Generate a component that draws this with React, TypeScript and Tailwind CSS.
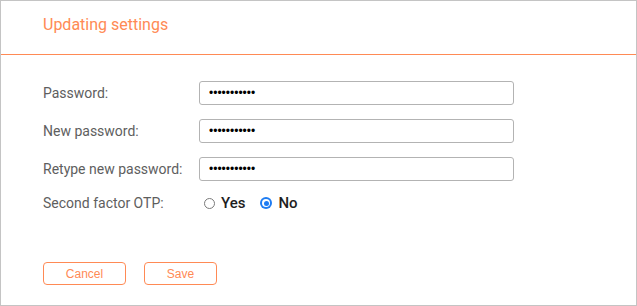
import React from "react";

const labelCls = "w-[156px] shrink-0 text-[14px] text-[#5e5e5e] font-['Roboto',sans-serif]";

function PwdRow({ label }: { label: string }) {
  return (
    <div className="flex items-center h-[24px]">
      <div className={labelCls}>{label}</div>
      <input
        type="password"
        readOnly
        defaultValue="abcdefghijk"
        className="w-[315px] h-[24px] border border-[#b3b3b3] rounded-[3px] px-[9px] text-[12px] text-black font-['Liberation_Sans',sans-serif] outline-none bg-white"
      />
    </div>
  );
}

export default function App() {
  return (
    <div className="w-[637px] h-[306px] border border-[#c4c4c4] bg-white flex flex-col">
      <div className="h-[54px] shrink-0 border-b border-[#ff8a55] flex items-center pl-[42px] pb-[6px]">
        <span className="text-[16px] text-[#ff8a55] font-['Roboto',sans-serif]">Updating settings</span>
      </div>
      <div className="flex flex-col pl-[42px] pt-[26px] gap-[14px]">
        <PwdRow label="Password:" />
        <PwdRow label="New password:" />
        <PwdRow label="Retype new password:" />
        <div className="flex items-center h-[16px]">
          <div className={labelCls}>Second factor OTP:</div>
          <div className="flex items-center pl-[5px] font-['Roboto',sans-serif] text-[15px] font-medium text-[#1e1e1e]">
            <span className="w-[11px] h-[11px] rounded-full border border-[#7a7a7a] bg-white"></span>
            <span className="ml-[6px]">Yes</span>
            <span className="ml-[15px] w-[12px] h-[12px] rounded-full bg-[#1e7cf2] flex items-center justify-center">
              <span className="w-[8px] h-[8px] rounded-full bg-white flex items-center justify-center">
                <span className="w-[5px] h-[5px] rounded-full bg-[#1e7cf2]"></span>
              </span>
            </span>
            <span className="ml-[6px]">No</span>
          </div>
        </div>
        <div className="flex items-center gap-[18px] mt-[37px]">
          <button className="w-[83px] h-[23px] border border-[#ff8a55] rounded-[4px] text-[12px] text-[#ff8a55] font-['Liberation_Sans',sans-serif] bg-white">
            Cancel
          </button>
          <button className="w-[73px] h-[23px] border border-[#ff8a55] rounded-[4px] text-[12px] text-[#ff8a55] font-['Liberation_Sans',sans-serif] bg-white">
            Save
          </button>
        </div>
      </div>
    </div>
  );
}
